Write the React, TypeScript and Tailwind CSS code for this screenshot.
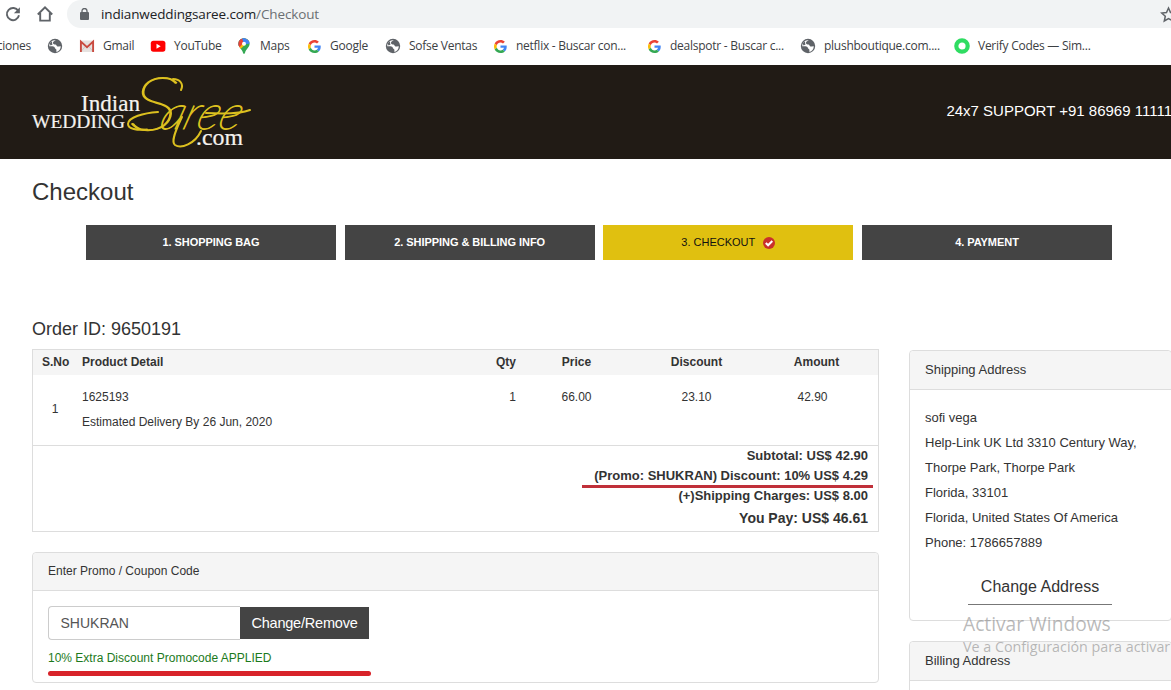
import React from 'react'

type IconName = 'globe' | 'gmail' | 'youtube' | 'maps' | 'google' | 'ring'

type Bookmark = { label: string; icon: IconName; box: string }

const BOOKMARKS: Bookmark[] = [
  { label: '', icon: 'globe', box: 'w-8' },
  { label: 'Gmail', icon: 'gmail', box: 'w-[71px]' },
  { label: 'YouTube', icon: 'youtube', box: 'w-[86px]' },
  { label: 'Maps', icon: 'maps', box: 'w-[70px]' },
  { label: 'Google', icon: 'google', box: 'w-[79px]' },
  { label: 'Sofse Ventas', icon: 'globe', box: 'w-[107px]' },
  { label: 'netflix - Buscar con...', icon: 'google', box: 'w-[154px]' },
  { label: 'dealspotr - Buscar c...', icon: 'google', box: 'w-[154px]' },
  { label: 'plushboutique.com....', icon: 'globe', box: 'w-[154px]' },
  { label: 'Verify Codes — Sim...', icon: 'ring', box: 'w-[150px]' },
]

const ADDRESS = [
  'sofi vega',
  'Help-Link UK Ltd 3310 Century Way,',
  'Thorpe Park, Thorpe Park',
  'Florida, 33101',
  'Florida, United States Of America',
  'Phone: 1786657889',
]

function BookmarkIcon({ name }: { name: IconName }) {
  if (name === 'gmail') {
    return (
      <svg className="size-4" viewBox="0 0 16 16">
        <path d="M1 2.500h14v11.500H1z" fill="#e6e2e0" />
        <path d="M2 13.500 6.200 8.500M14 13.500 9.800 8.500" stroke="#c9c3c0" strokeWidth="0.8" />
        <path d="M1.900 14V3.600L8 9.100l6.100-5.500V14" fill="none" stroke="#c94a3f" strokeWidth="1.900" />
      </svg>
    )
  }
  if (name === 'youtube') {
    return (
      <svg className="size-4" viewBox="0 0 16 16">
        <rect x="0.8" y="2.700" width="14.600" height="11" rx="2.600" fill="#f00" />
        <path d="M6.500 5.700v5l4.200-2.500z" fill="#fff" />
      </svg>
    )
  }
  if (name === 'maps') {
    return (
      <svg className="size-4" viewBox="0 0 16 16">
        <defs>
          <clipPath id="pin">
            <path d="M8 .2a5.600 5.600 0 0 0-5.600 5.600c0 3.600 3.300 4.900 4.500 8.600.3 1 .5 1.400 1.100 1.400s.8-.4 1.100-1.400c1.200-3.700 4.500-5 4.500-8.600A5.600 5.600 0 0 0 8 .2z" />
          </clipPath>
        </defs>
        <g clipPath="url(#pin)">
          <path d="M0 0h16v16H0z" fill="#34a853" />
          <path d="M0 0h16L3 12.500H0z" fill="#fbbc04" />
          <path d="M0 0h10L2.500 9H0z" fill="#1a73e8" />
          <path d="M0 0h6l2.500 3.500L3.500 9.500 0 7z" fill="#ea4335" />
          <path d="M6 0h10v5L8 6.500z" fill="#4285f4" />
        </g>
        <circle cx="8" cy="5.700" r="2" fill="#fff" />
      </svg>
    )
  }
  if (name === 'google') {
    return (
      <svg className="size-[13px]" viewBox="0 0 48 48">
        <path fill="#ea4335" d="M24 9.500c3.540 0 6.710 1.220 9.210 3.600l6.850-6.850C35.900 2.380 30.470 0 24 0 14.620 0 6.510 5.380 2.560 13.220l7.980 6.190C12.430 13.720 17.740 9.500 24 9.500z" />
        <path fill="#4285f4" d="M46.980 24.550c0-1.570-.15-3.090-.38-4.550H24v9.020h12.940c-.58 2.960-2.260 5.480-4.780 7.180l7.730 6c4.510-4.180 7.090-10.360 7.090-17.650z" />
        <path fill="#fbbc05" d="M10.530 28.590A14.500 14.500 0 0 1 9.770 24c0-1.600.27-3.140.76-4.590l-7.980-6.190A23.900 23.900 0 0 0 0 24c0 3.880.92 7.540 2.560 10.780z" />
        <path fill="#34a853" d="M24 48c6.480 0 11.930-2.130 15.890-5.810l-7.730-6c-2.150 1.450-4.920 2.300-8.160 2.300-6.260 0-11.570-4.220-13.470-9.910l-7.980 6.190C6.510 42.620 14.620 48 24 48z" />
      </svg>
    )
  }
  if (name === 'ring') {
    return (
      <svg className="size-4" viewBox="0 0 16 16">
        <circle cx="8" cy="8" r="5.700" fill="none" stroke="#2fdc62" strokeWidth="4.200" />
      </svg>
    )
  }
  return (
    <svg className="size-4" viewBox="0 0 16 16">
      <circle cx="8" cy="8" r="7.200" fill="#5f6368" />
      <path d="M8.800 2.300C7.600 3 6.300 3.400 6 4.600c-.3 1.300.6 1.700 1.700 1.800 1.200.1 1.700.3 1.900 1.200.2.900 1.100 1.100 2 .9l2.200-.3c0 3-1.900 5-4.400 5.700V12c0-1-1.300-.9-1.500-1.900-.2-1.200-1.200-1.900-2.500-1.900H2.200A5.800 5.800 0 0 1 8.800 2.300z" fill="#fff" />
      <path d="M2.700 5.500 5 3.200c.3 1.500-.2 2.300.6 3.400L3.500 7.600z" fill="#5f6368" />
    </svg>
  )
}

function BrowserBar() {
  return (
    <div className="h-[65px] bg-white font-['Open_Sans',sans-serif]">
      <div className="flex h-7 items-center">
        <svg className="ml-[5px] size-4" viewBox="0 0 16 16">
          <path d="M13.300 5A6.100 6.100 0 1 0 14 9.300" fill="none" stroke="#5f6368" strokeWidth="1.900" />
          <path d="M14.900 1.200v6H8.900z" fill="#5f6368" />
        </svg>
        <svg className="ml-4 h-[18px] w-4" viewBox="0 0 16 18">
          <path d="M.8 9.500 8 2.300l7.200 7.200M3.200 8v7.600h9.600V8" fill="none" stroke="#5f6368" strokeWidth="1.900" />
        </svg>
        <div className="ml-[14px] flex h-7 flex-1 items-center rounded-l-full bg-[#f1f3f4]">
          <svg className="ml-[13px] h-3 w-[9px]" viewBox="0 0 9 12">
            <rect y="4" width="9" height="8" rx="1" fill="#5f6368" />
            <path d="M2 5V3a2.500 2.500 0 0 1 5 0v2" fill="none" stroke="#5f6368" strokeWidth="1.300" />
          </svg>
          <div className="ml-3 text-[13.5px] leading-5 tracking-[-0.13px] whitespace-nowrap text-[#202124]">
            indianweddingsaree.com<span className="text-[#6b6f73]">/Checkout</span>
          </div>
          <svg className="mr-[-6px] ml-auto size-[17px]" viewBox="0 0 17 17">
            <path d="m8.500 2 2 4.500 4.800.5-3.600 3.200 1 4.800-4.200-2.500L4.300 15l1-4.800L1.700 7l4.800-.5z" fill="none" stroke="#5f6368" strokeWidth="1.500" />
          </svg>
        </div>
      </div>
      <div className="flex h-9 items-center text-[12px] tracking-[-0.26px] whitespace-nowrap text-[#3c4043]">
        <div className="flex w-[47px] shrink-0 justify-end pr-4">ciones</div>
        {BOOKMARKS.map((b, i) => (
          <div key={i} className={`flex shrink-0 items-center gap-2 ${b.box}`}>
            <span className="flex size-4 shrink-0 items-center justify-center">
              <BookmarkIcon name={b.icon} />
            </span>
            <span>{b.label}</span>
          </div>
        ))}
      </div>
    </div>
  )
}

function Logo() {
  return (
    <svg className="ml-[30px] h-[82px] w-[226px] overflow-visible" viewBox="30 72 226 82">
      <g fill="#f5f2ee" stroke="#f5f2ee" strokeWidth="0.2" fontFamily="'Liberation Serif', serif">
        <text x="81" y="112" fontSize="23" textLength="59" lengthAdjust="spacingAndGlyphs">Indian</text>
        <text x="32" y="128.500" fontSize="19.500" textLength="93" lengthAdjust="spacingAndGlyphs">WEDDING</text>
        <text x="196" y="146" fontSize="23" textLength="47" lengthAdjust="spacingAndGlyphs">.com</text>
      </g>
      <g fill="#dcc01f" fontFamily="Lato, sans-serif" fontStyle="italic" fontWeight="100" stroke="#dcc01f" strokeWidth="1.200">
        <text transform="translate(129 130.500) skewX(-4)" fontSize="74" textLength="48" lengthAdjust="spacingAndGlyphs">S</text>
        <text transform="translate(158 130) skewX(-18)" fontSize="47" textLength="80" lengthAdjust="spacingAndGlyphs">aree</text>
      </g>
      {/* swashes round the script word */}
      <g fill="none" stroke="#dcc01f" strokeWidth="2" strokeLinecap="round">
        <path d="M173 80c7 0 11 5 8 11" />
        <path d="M158 113c-14 1-30 5-30 12 0 5 9 6.500 19 5.500" />
        <path d="M182 118c-4 9-12 24-7 28 6 4 20-1 26-14" />
        <path d="M206 114c18 1 34 1 44-3" />
      </g>
    </svg>
  )
}

function Steps() {
  const step = 'flex w-[250px] shrink-0 items-center justify-center bg-[#444] text-[11px] font-bold tracking-[-0.05px] text-white'
  return (
    <div className="mt-[18px] ml-[86px] flex h-[35px] gap-[8.67px]">
      <div className={step}>1. SHOPPING BAG</div>
      <div className={step}>2. SHIPPING &amp; BILLING INFO</div>
      <div className="flex w-[250px] shrink-0 items-center justify-center bg-[#e0c010] text-[11px] text-[#111]">
        3. CHECKOUT
        <svg className="ml-2 size-3" viewBox="0 0 12 12">
          <circle cx="6" cy="6" r="6" fill="#c9302c" />
          <path d="m2.800 6 2.300 2.300L9.300 4" fill="none" stroke="#fff" strokeWidth="2" />
        </svg>
      </div>
      <div className={step}>4. PAYMENT</div>
    </div>
  )
}

function OrderTable() {
  return (
    <div className="h-[183px] border border-[#ddd]">
      <div className="flex h-[25px] bg-[#f5f5f5] leading-6 font-bold">
        <div className="w-[49px] pl-[9px]">S.No</div>
        <div className="w-[374px]">Product Detail</div>
        <div className="w-[60px] text-right">Qty</div>
        <div className="w-[121px] text-center">Price</div>
        <div className="w-[119px] text-center">Discount</div>
        <div className="w-[121px] text-center">Amount</div>
      </div>
      <div className="flex h-[71px] border-b border-[#ddd] pt-[10px] leading-[25px]">
        <div className="w-[49px] pt-3 pr-[5px] text-center">1</div>
        <div className="w-[374px]">
          <div>1625193</div>
          <div>Estimated Delivery By 26 Jun, 2020</div>
        </div>
        <div className="w-[60px] text-right">1</div>
        <div className="w-[121px] text-center">66.00</div>
        <div className="w-[119px] text-center">23.10</div>
        <div className="w-[113px] text-center">42.90</div>
      </div>
      <div className="pr-[10px] text-right text-[13px] leading-5 font-bold">
        <div>Subtotal: US$ 42.90</div>
        <div className="relative">
          (Promo: SHUKRAN) Discount: 10% US$ 4.29
          <span className="absolute -right-[5px] bottom-[-2px] h-[3px] w-[291px] bg-[#c0303a]" />
        </div>
        <div>(+)Shipping Charges: US$ 8.00</div>
        <div className="pt-[2px] text-[14px]">You Pay: US$ 46.61</div>
      </div>
    </div>
  )
}

function PromoPanel() {
  return (
    <div className="mt-5 h-[131px] rounded border border-[#ddd]">
      <div className="h-[38px] rounded-t border-b border-[#ddd] bg-[#f5f5f5] pl-[15px] leading-[36px]">Enter Promo / Coupon Code</div>
      <div className="pt-[15px] pl-[15px]">
        <div className="flex items-center">
          <div className="h-[34px] w-48 rounded-l border border-r-0 border-[#ccc] pl-[11.5px] text-[14px] leading-8 text-[#555]">SHUKRAN</div>
          <button className="h-8 w-[129px] bg-[#444] pt-px text-[14.5px] tracking-[-0.2px] text-white">Change/Remove</button>
        </div>
        <div className="mt-2 leading-5 text-[#1c7a1c]">10% Extra Discount Promocode APPLIED</div>
        <div className="mt-[3px] h-[5px] w-[323px] rounded-full bg-[#d8232a]" />
      </div>
    </div>
  )
}

export default function App() {
  return (
    <div className="relative h-[690px] w-[1171px] overflow-hidden bg-white font-['Liberation_Sans',Arial,sans-serif] text-[12px] text-[#333]">
      <BrowserBar />
      <header className="flex h-[94px] items-center justify-between bg-[#211b15]">
        <Logo />
        <div className="mr-[-1px] pb-[2px] text-[15px] whitespace-nowrap text-white">24x7 SUPPORT +91 86969 11111</div>
      </header>

      <h1 className="mt-[18px] ml-8 text-[24px] leading-[30px]">Checkout</h1>
      <Steps />

      <div className="mt-[57px] flex">
        <main className="ml-8 w-[847px] shrink-0">
          <h2 className="h-8 text-[18px] leading-6">Order ID: 9650191</h2>
          <OrderTable />
          <PromoPanel />
        </main>
        <aside className="mt-[33px] ml-[30px] w-[263px] shrink-0">
          <div className="h-[271px] rounded border border-[#ddd]">
            <div className="h-[39px] rounded-t border-b border-[#ddd] bg-[#f5f5f5] pl-[15px] text-[13px] leading-[38px]">Shipping Address</div>
            <div className="pt-[15px] pl-[15px] text-[13px] leading-[25px]">
              {ADDRESS.map((line) => <div key={line}>{line}</div>)}
            </div>
            <div className="mt-[14px] ml-[58px] h-[36px] w-36 border-b border-[#777] text-center text-[16px] leading-9">Change Address</div>
          </div>
          <div className="mt-5 h-[100px] rounded border border-[#ddd]">
            <div className="h-[39px] rounded-t border-b border-[#ddd] bg-[#f5f5f5] pl-[15px] text-[13px] leading-[38px]">Billing Address</div>
          </div>
        </aside>
      </div>

      {/* system activation overlay */}
      <div className="absolute top-[611px] left-[963px] font-['Open_Sans',sans-serif] whitespace-nowrap text-[#808080]/55">
        <div className="text-[19.2px] leading-[26px]">Activar Windows</div>
        <div className="text-[14.3px] leading-5">Ve a Configuración para activar</div>
      </div>
    </div>
  )
}
